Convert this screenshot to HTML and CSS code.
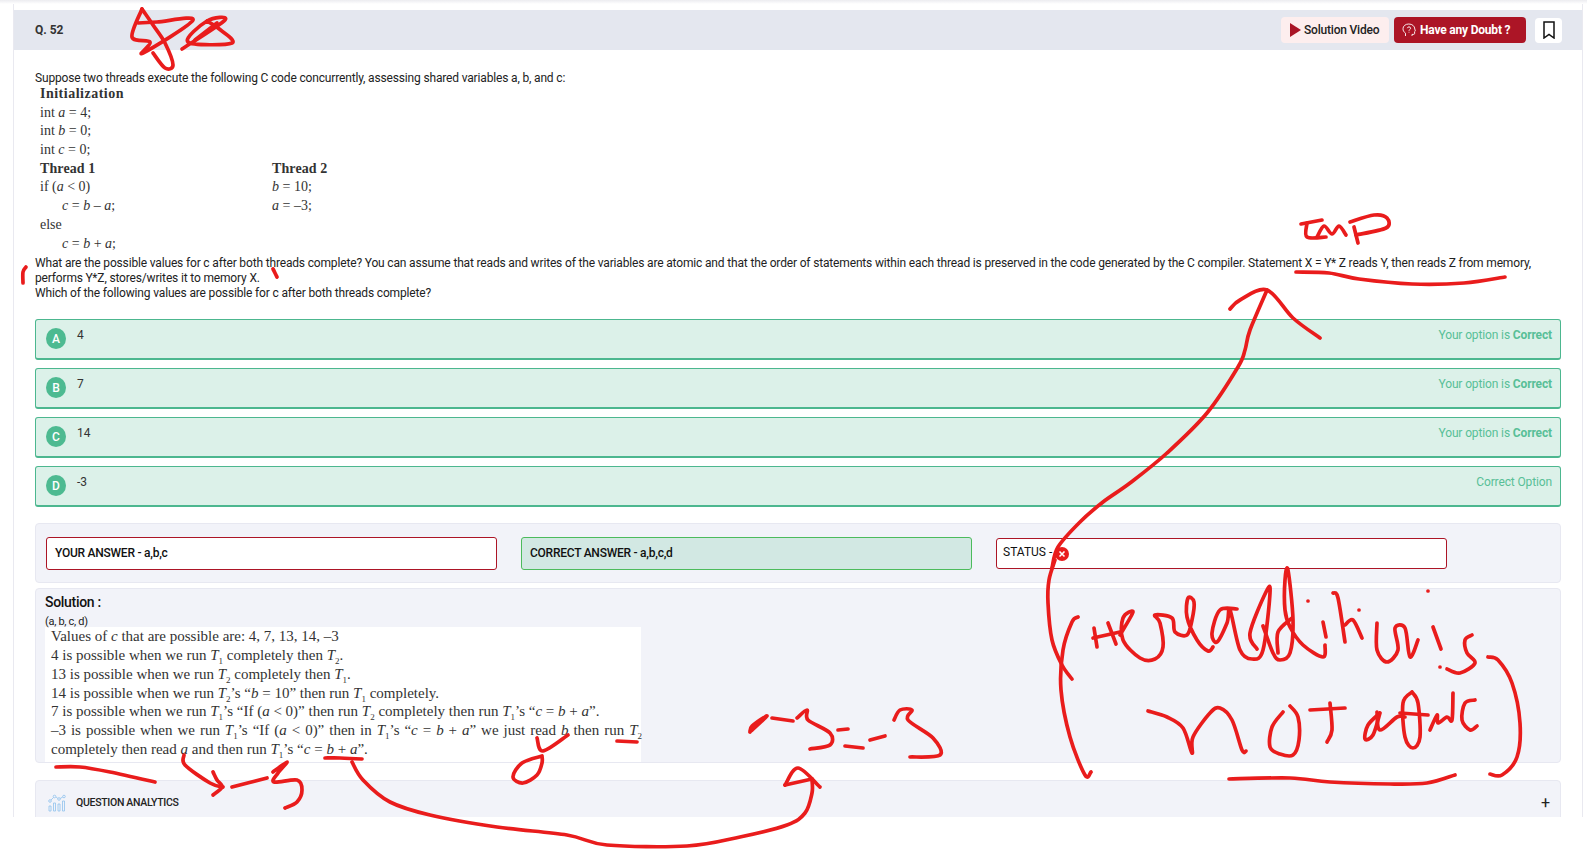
FILE: index.html
```html
<!DOCTYPE html>
<html lang="en">
<head>
<meta charset="utf-8" />
<meta name="viewport" content="width=device-width, initial-scale=1" />
<title>Q. 52 Solution</title>
<link rel="stylesheet" href="styles.css">
</head>
<body>
  <div class="top-strip"></div>
  <div class="page">
    <div class="q-header">
      <span class="q-number">Q. 52</span>
      <div class="q-actions">
        <button class="btn-video">
          <svg class="play-icon" viewBox="0 0 11 14"><path d="M0 0L11 7L0 14Z" /></svg>
          Solution Video
        </button>
        <button class="btn-doubt">
          <svg class="doubt-icon" viewBox="0 0 14 14" fill="none" stroke="#fff" stroke-width="0.9">
            <path d="M3.5 13V10.2C1.8 9 1 7.6 1 5.8C1 3 3.4 1 6.8 1C10.2 1 12.8 3.2 12.8 6C12.8 6.6 13.4 7.6 13.4 8C13.4 8.4 12.6 8.5 12.6 8.8V10.6C12.6 11.4 11.6 11.5 10 11.4V13" />
            <path d="M5.4 5.2C5.4 3.4 8.6 3.4 8.6 5.2C8.6 6.4 7 6.4 7 7.8M7 8.8V9.6" />
          </svg>
          Have any Doubt ?
        </button>
        <div class="bookmark-tile">
          <svg class="bookmark-icon" viewBox="0 0 12 18" fill="none" stroke="#111" stroke-width="1.5"><path d="M1 1H11V17L6 13.5L1 17Z" /></svg>
        </div>
      </div>
    </div>

    <div class="question">
      <p>Suppose two threads execute the following C code concurrently, assessing shared variables a, b, and c:</p>
      <div class="code-figure">
        <div class="code-row"><b class="wide">Initialization</b></div>
        <div class="code-row">int <i>a</i> = 4;</div>
        <div class="code-row">int <i>b</i> = 0;</div>
        <div class="code-row">int <i>c</i> = 0;</div>
        <div class="code-row two-col"><b>Thread 1</b><b>Thread 2</b></div>
        <div class="code-row two-col"><span>if (<i>a</i> &lt; 0)</span><span><i>b</i> = 10;</span></div>
        <div class="code-row two-col"><span class="indent"><i>c</i> = <i>b</i> – <i>a</i>;</span><span><i>a</i> = –3;</span></div>
        <div class="code-row">else</div>
        <div class="code-row"><span class="indent"><i>c</i> = <i>b</i> + <i>a</i>;</span></div>
      </div>
      <p>What are the possible values for c after both threads complete? You can assume that reads and writes of the variables are atomic and that the order of statements within each thread is preserved in the code generated by the C compiler. Statement X = Y* Z reads Y, then reads Z from memory, performs Y*Z, stores/writes it to memory X.</p>
      <p>Which of the following values are possible for c after both threads complete?</p>
    </div>

    <div class="options">
      <div class="option">
        <span class="option-badge">A</span><span class="option-text">4</span>
        <span class="option-status">Your option is <b>Correct</b></span>
      </div>
      <div class="option">
        <span class="option-badge">B</span><span class="option-text">7</span>
        <span class="option-status">Your option is <b>Correct</b></span>
      </div>
      <div class="option">
        <span class="option-badge">C</span><span class="option-text">14</span>
        <span class="option-status">Your option is <b>Correct</b></span>
      </div>
      <div class="option">
        <span class="option-badge">D</span><span class="option-text">-3</span>
        <span class="option-status">Correct Option</span>
      </div>
    </div>

    <div class="panel answer-panel">
      <div class="answer-box your-answer">YOUR ANSWER - a,b,c</div>
      <div class="answer-box correct-answer">CORRECT ANSWER - a,b,c,d</div>
      <div class="answer-box status-box">STATUS -
        <svg class="status-icon" viewBox="0 0 14 14"><circle cx="7" cy="7" r="7" fill="#e91c1c" /><path d="M4.5 4.5L9.5 9.5M9.5 4.5L4.5 9.5" stroke="#fff" stroke-width="1.6" /></svg>
      </div>
    </div>

    <div class="panel solution-panel">
      <h2>Solution :</h2>
      <div class="solution-key">(a, b, c, d)</div>
      <div class="solution-figure">
        <div>Values of <i>c</i> that are possible are: 4, 7, 13, 14, –3</div>
        <div>4 is possible when we run <i>T</i><sub>1</sub> completely then <i>T</i><sub>2</sub>.</div>
        <div>13 is possible when we run <i>T</i><sub>2</sub> completely then <i>T</i><sub>1</sub>.</div>
        <div>14 is possible when we run <i>T</i><sub>2</sub>’s “<i>b</i> = 10” then run <i>T</i><sub>1</sub> completely.</div>
        <div>7 is possible when we run <i>T</i><sub>1</sub>’s “If (<i>a</i> &lt; 0)” then run <i>T</i><sub>2</sub> completely then run <i>T</i><sub>1</sub>’s “<i>c</i> = <i>b</i> + <i>a</i>”.</div>
        <div class="stretched">–3 is possible when we run <i>T</i><sub>1</sub>’s “If (<i>a</i> &lt; 0)” then in <i>T</i><sub>1</sub>’s “<i>c</i> = <i>b</i> + <i>a</i>” we just read <i>b</i> then run <i>T</i><sub>2</sub></div>
        <div>completely then read <i>a</i> and then run <i>T</i><sub>1</sub>’s “<i>c</i> = <i>b</i> + <i>a</i>”.</div>
      </div>
    </div>

    <div class="panel analytics-panel">
      <svg class="analytics-icon" viewBox="0 0 18 18" fill="none" stroke="#8fc1ee" stroke-width="0.8">
        <circle cx="2" cy="7" r="1.3" /><circle cx="6.5" cy="2.5" r="1.3" /><circle cx="11" cy="5" r="1.3" /><circle cx="16" cy="2.5" r="1.3" />
        <path d="M3 6L5.5 3.5M8 3L9.8 4.3M12.2 4.4L14.8 3" />
        <path d="M1 12H3V17H1ZM5.5 9H7.5V17H5.5ZM10 10H12V17H10ZM14.5 7H16.5V17H14.5Z" />
      </svg>
      <span class="analytics-title">QUESTION ANALYTICS</span>
      <span class="analytics-toggle">+</span>
    </div>
  </div>

  <!-- pen marks drawn over the page -->
  <svg id="ink" class="ink" viewBox="0 0 1587 850"></svg>
  <script src="annotations.js"></script>
</body>
</html>
```

FILE: styles.css
```css
* {
  box-sizing: border-box;
}
html, body {
  height: 850px;
  overflow: hidden;
}
body {
  margin: 0;
  background: #fff;
  font-family: Roboto, Arial, sans-serif;
  color: #222;
  position: relative;
}
.top-strip {
  height: 4px;
  background: linear-gradient(#ececf0, #fff);
}
.page {
  margin-left: 13px;
  width: 1570px;
  height: 813px;
  border-left: 1px solid #e9e9f0;
  border-right: 1px solid #e9e9f0;
  overflow: hidden;
  padding-top: 6px;
}
.q-header {
  height: 40px;
  background: #e4e7ef;
  display: flex;
  align-items: center;
  justify-content: space-between;
  padding: 0 20px 0 21px;
}
.q-number {
  font-size: 12px;
  font-weight: 700;
  color: #333;
}
.q-actions {
  display: flex;
  align-items: center;
}
.q-actions button {
  height: 26px;
  border: none;
  border-radius: 4px;
  font-family: inherit;
  font-size: 12px;
  letter-spacing: -0.2px;
  display: flex;
  align-items: center;
  padding: 0;
}
.btn-video {
  width: 108px;
  margin-right: 5px;
  background: #fdeeee;
  color: #222;
  font-weight: 500;
  padding-left: 9px !important;
}
.play-icon {
  width: 11px;
  height: 14px;
  fill: #a91526;
  margin-right: 3px;
}
.btn-doubt {
  width: 132px;
  margin-right: 9px;
  background: #ac1526;
  color: #fff;
  font-weight: 700;
  padding-left: 8px !important;
}
.doubt-icon {
  width: 14px;
  height: 14px;
  margin-right: 4px;
}
.bookmark-tile {
  width: 27px;
  height: 25px;
  background: #fff;
  border-radius: 4px;
  display: flex;
  align-items: center;
  justify-content: center;
}
.bookmark-icon {
  width: 12px;
  height: 18px;
}
.question {
  padding: 21px 21px 0;
  font-size: 12px;
  line-height: 15px;
  letter-spacing: -0.16px;
  color: #222;
}
.question p {
  margin: 0;
}
.code-figure {
  margin-top: -1px;
  padding: 0 0 3px 5px;
  font-family: "Liberation Serif", serif;
  font-size: 14px;
  letter-spacing: 0;
  color: #333;
}
.code-row {
  height: 18.7px;
  line-height: 18.7px;
}
.two-col {
  display: grid;
  grid-template-columns: 232px auto;
}
.code-row b {
  letter-spacing: 0.1px;
}
.code-row b.wide {
  letter-spacing: 0.5px;
}
.indent {
  margin-left: 22px;
}
.options {
  margin: 18px 21px 0;
  display: flex;
  flex-direction: column;
  gap: 8px;
}
.option {
  height: 41px;
  background: #dcf1e9;
  border: 1px solid #4cb78f;
  border-bottom-width: 2px;
  border-radius: 3px;
  display: flex;
  align-items: flex-start;
  padding: 8px 8px 0 10px;
}
.option-badge {
  width: 20px;
  height: 21px;
  border-radius: 50%;
  background: #4dba91;
  color: #fff;
  font-size: 12px;
  font-weight: 500;
  display: flex;
  align-items: center;
  justify-content: center;
}
.option-text {
  margin-left: 11px;
  font-size: 12px;
  line-height: 14px;
  color: #333;
}
.option-status {
  margin-left: auto;
  font-size: 12px;
  line-height: 14px;
  letter-spacing: -0.13px;
  color: #58bf97;
}
.panel {
  margin: 0 21px;
  background: #f2f3f9;
  border: 1px solid #e7e8f1;
  border-radius: 4px;
}
.answer-panel {
  margin-top: 16px;
  height: 60px;
  padding-left: 10px;
  display: flex;
  align-items: center;
}
.answer-box {
  height: 33px;
  border-radius: 3px;
  font-size: 12px;
  font-weight: 500;
  letter-spacing: -0.25px;
  color: #111;
  padding: 0 8px;
  display: flex;
  align-items: center;
}
.your-answer {
  width: 451px;
  background: #fff;
  border: 1px solid #ac1526;
}
.correct-answer {
  width: 451px;
  margin-left: 24px;
  background: #d2e8e3;
  border: 1px solid #4cbb5c;
}
.status-box {
  width: 451px;
  height: 31px;
  margin-left: 24px;
  padding: 0 6px 3px;
  font-weight: 400;
  letter-spacing: 0;
  background: #fff;
  border: 1px solid #ac1526;
}
.status-icon {
  width: 14px;
  height: 14px;
  margin: 4px 0 0 3px;
}
.solution-panel {
  margin-top: 5px;
  height: 175px;
  padding: 5px 0 0 9px;
}
.solution-panel h2 {
  margin: 0;
  font-size: 14px;
  font-weight: 500;
  line-height: 17px;
  letter-spacing: -0.3px;
  color: #111;
}
.solution-key {
  margin-top: 4px;
  font-size: 11px;
  line-height: 13px;
  letter-spacing: -0.3px;
  color: #222;
}
.solution-figure {
  width: 596px;
  height: 135px;
  margin-top: -1px;
  background: #fff;
  padding: 0 0 0 6px;
  font-family: "Liberation Serif", serif;
  font-size: 15px;
  line-height: 18.8px;
  color: #333;
}
.solution-figure > div {
  height: 18.8px;
  white-space: nowrap;
}
.solution-figure .stretched {
  word-spacing: 1.2px;
}
.solution-figure sub {
  font-size: 9px;
  line-height: 0;
}
.analytics-panel {
  margin-top: 17px;
  height: 44px;
  display: flex;
  align-items: flex-start;
  padding: 13px 10px 0 12px;
}
.analytics-icon {
  width: 18px;
  height: 18px;
}
.analytics-title {
  margin-left: 10px;
  font-size: 10.5px;
  line-height: 18px;
  font-weight: 500;
  letter-spacing: -0.3px;
  color: #222;
}
.analytics-toggle {
  margin-left: auto;
  font-size: 16px;
  line-height: 18px;
  color: #222;
}
.ink {
  position: absolute;
  left: 0;
  top: 0;
  width: 1587px;
  height: 850px;
  pointer-events: none;
  fill: none;
  stroke: #e91c1c;
  stroke-width: 3.7;
  stroke-linecap: round;
  stroke-linejoin: round;
}
```

FILE: annotations.js
```js
// each stroke is a flat list of x,y points, smoothed into a curve below
const strokes = [
  // star scribble in the header
  [142,9, 132,37, 150,42, 143,53, 193,20, 157,22, 138,23],
  [142,9, 153,25, 165,43, 173,65, 165,68, 153,53],
  [182,49, 225,20, 207,21, 188,42, 232,43, 218,28, 207,21],
  [195,40, 217,23],
  // margin ticks
  [26,267, 23,272, 23,283],
  [273,269, 277,277],
  // tmp and underline
  [1296,272, 1329,273, 1359,279, 1412,284, 1464,283, 1505,277],
  [1301,224, 1322,220],
  [1307,223, 1307,237, 1326,237],
  [1317,237, 1324,226, 1332,234, 1339,226, 1346,235],
  [1358,243, 1354,227],
  [1350,222, 1374,215, 1387,218, 1386,228, 1356,235],
  // big arrow up from the status box
  [1052,568, 1058,547, 1080,522, 1103,502, 1130,483, 1167,453, 1207,413, 1238,367, 1245,350, 1250,330, 1267,290],
  [1230,309, 1240,300, 1267,290, 1293,318, 1320,338],
  // left bracket
  [1055,560, 1049,580, 1048,603, 1052,640, 1062,665, 1072,679],
  [1078,617, 1072,622, 1063,650, 1061,690, 1070,737, 1085,775, 1091,772],
  // "thread addition is"
  [1094,628, 1097,647],
  [1093,638, 1120,632],
  [1108,623, 1116,644],
  [1120,635, 1133,612, 1123,618, 1123,640, 1140,658, 1155,659, 1163,647, 1160,623, 1155,615, 1172,618, 1175,632, 1187,635, 1192,620, 1194,602, 1188,598, 1187,617, 1197,640, 1208,651, 1213,647],
  [1237,609, 1220,610, 1212,633, 1217,642, 1227,623, 1230,610, 1240,650, 1252,659, 1263,650, 1270,593, 1266,592, 1250,633, 1257,649],
  [1263,626, 1273,653, 1280,660, 1290,653, 1293,620, 1288,570, 1285,580, 1285,610, 1290,627, 1303,645, 1323,657, 1325,645],
  [1292,618, 1278,632, 1278,653],
  [1308,601, 1308,601],
  [1323,622, 1326,637],
  [1333,593, 1338,598, 1345,642],
  [1359,610, 1359,610],
  [1345,625, 1353,620, 1362,638],
  [1377,623, 1377,650, 1387,662, 1398,650, 1395,628, 1405,628, 1410,657, 1418,640],
  [1428,591, 1428,591],
  [1433,627, 1441,649],
  [1440,667, 1440,667],
  [1472,635, 1465,640, 1467,653, 1475,663, 1460,673, 1447,669],
  // right bracket
  [1488,657, 1498,660, 1512,683, 1520,723, 1517,757, 1502,775, 1490,774],
  // "not atomic"
  [1148,711, 1167,717, 1183,728, 1192,753, 1193,737, 1210,713, 1220,708, 1232,720, 1242,750, 1246,751],
  [1283,712, 1272,727, 1270,747, 1280,754, 1293,755, 1299,740, 1298,717, 1290,706],
  [1310,710, 1345,708],
  [1330,703, 1332,730, 1327,742],
  [1380,713, 1368,725, 1365,739, 1373,735, 1380,713],
  [1377,712, 1380,730, 1397,717, 1405,717],
  [1412,692, 1403,703, 1405,737, 1413,748, 1420,737, 1418,703, 1412,692],
  [1400,713, 1428,715],
  [1430,730, 1437,715, 1438,723, 1447,717, 1452,720, 1453,693],
  [1475,700, 1465,703, 1462,720, 1470,730, 1477,726],
  [1229,779, 1290,778, 1330,782, 1390,784, 1427,783, 1455,775],
  // under the solution figure
  [56,767, 80,767, 110,772, 155,782],
  [184,755, 185,765, 210,783, 223,787],
  [213,772, 217,780, 222,787, 213,795],
  [232,787, 267,778],
  [273,772, 287,762, 278,773, 274,782, 297,780, 302,790, 297,802, 285,808],
  // long arrow to the worked value
  [325,758, 340,758, 362,759],
  [352,762, 363,780, 390,802, 430,815, 497,827, 567,835, 607,845, 687,846, 740,837, 787,825, 805,813, 812,793, 812,780],
  [785,785, 798,768, 820,787],
  [785,785, 812,779],
  // b value
  [537,738, 543,751, 568,735],
  [542,756, 522,763, 513,777, 523,783, 537,775, 542,763, 542,756],
  [617,741, 637,742],
  // "a-3 = -3"
  [750,732, 767,716, 752,726, 750,732],
  [772,718, 793,721],
  [797,718, 807,710, 808,720, 830,733, 830,745, 810,749],
  [838,730, 848,729],
  [845,746, 863,748],
  [870,740, 885,736],
  [894,720, 900,710, 912,710, 908,720, 933,738, 940,755, 910,757]
];

function strokePath(p) {
  const pts = [];
  for (let i = 0; i < p.length; i += 2) pts.push([p[i], p[i + 1]]);
  let d = 'M' + pts[0][0] + ' ' + pts[0][1];
  for (let i = 0; i < pts.length - 1; i++) {
    const a = pts[i - 1] || pts[i];
    const b = pts[i];
    const c = pts[i + 1];
    const e = pts[i + 2] || c;
    const c1x = (b[0] + (c[0] - a[0]) / 6).toFixed(1);
    const c1y = (b[1] + (c[1] - a[1]) / 6).toFixed(1);
    const c2x = (c[0] - (e[0] - b[0]) / 6).toFixed(1);
    const c2y = (c[1] - (e[1] - b[1]) / 6).toFixed(1);
    d += 'C' + c1x + ' ' + c1y + ' ' + c2x + ' ' + c2y + ' ' + c[0] + ' ' + c[1];
  }
  return d;
}

const ink = document.getElementById('ink');
strokes.forEach(s => {
  const path = document.createElementNS('http://www.w3.org/2000/svg', 'path');
  path.setAttribute('d', strokePath(s));
  ink.appendChild(path);
});
```
